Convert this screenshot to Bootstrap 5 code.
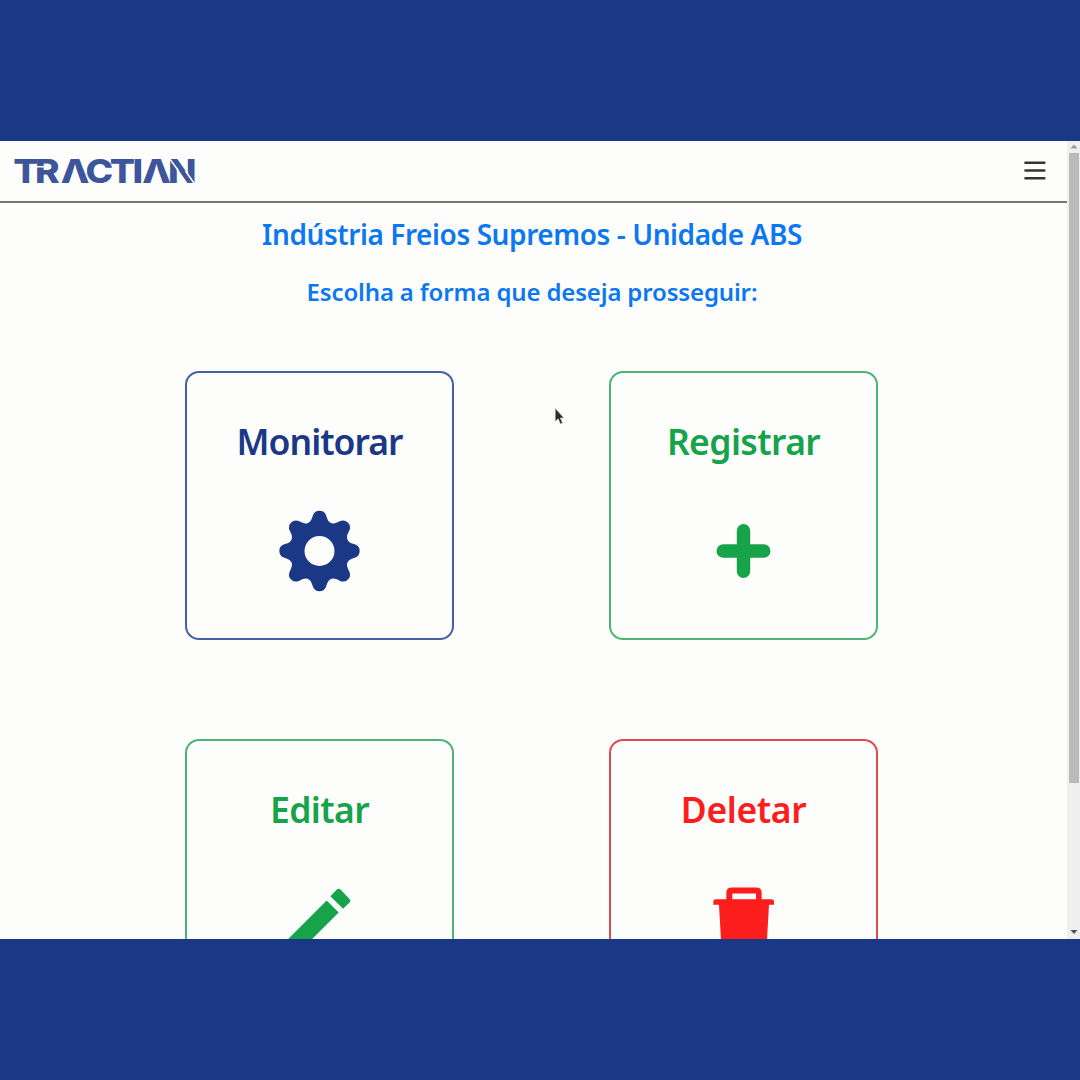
<!DOCTYPE html>
<html lang="pt-BR">
<head>
<meta charset="utf-8">
<meta name="viewport" content="width=device-width, initial-scale=1">
<title>Tractian</title>
<link href="https://cdn.jsdelivr.net/npm/bootstrap@5.3.0/dist/css/bootstrap.min.css" rel="stylesheet">
<style>
  body { background: #1b3887; font-family: "Noto Sans", "Open Sans", sans-serif; height: 1080px; padding: 141px 0; }
  .app-window { height: 798px; background: #fdfdfc; }
  .app-header { height: 62px; border-bottom: 2px solid #777; padding: 0 21px 0 14px; }
  .app-title, .app-subtitle { color: #0b78f2; font-weight: 600; white-space: nowrap; margin: 0; padding-right: 3px; }
  .app-title { font-size: 28px; line-height: 36px; margin-top: 13px; letter-spacing: -.43px; }
  .app-subtitle { font-size: 24px; line-height: 32px; margin-top: 24px; letter-spacing: -.15px; }
  .tiles { column-gap: 155px; row-gap: 99px; margin-top: 63px; padding-right: 4px; }
  .tile { width: 269px; height: 269px; border: 2px solid; border-radius: 14px; flex: none; }
  .tile h2 { font-size: 35.5px; line-height: 44px; margin: 46px 0 40px; font-weight: 600; letter-spacing: -1px; }
  .tile svg { width: 96px; height: 96px; fill: currentColor; margin-right: 1px; }
  .tone-blue { color: #1b3887; border-color: #4561a6; }
  .tone-green { color: #16a34a; border-color: #4cb573; }
  .tone-green h2 { letter-spacing: -.6px; }
  .tone-red { color: #fc1d1d; border-color: #dc4d4d; }
  .tone-red h2 { letter-spacing: -.4px; }
  .scroll-track { width: 13px; background: #efefef; padding: 0 1px 0 2px; }
  .scroll-thumb { height: 630px; width: 10px; background: #bababa; }
  .pointer { left: 554px; top: 266px; }
</style>
</head>
<body>
<div class="app-window d-flex position-relative overflow-hidden">
  <main class="flex-grow-1 overflow-hidden">
    <header class="app-header d-flex align-items-center justify-content-between">
      <svg class="overflow-visible" width="184" height="30" viewBox="0 0 184 30" role="img" aria-label="Tractian">
        <text y="27" transform="scale(1.13 1)" font-family="Inter, sans-serif" font-weight="800" font-size="33" fill="#3c559b" x="-.6 18.7 41.3 63.2 84.8 104.8 113.6 136.2">TRΛCTIΛN</text>
        <path d="M23 10.8h7.5M171.5 15 181 28.5M155.5 2.5 164.5 15" fill="none" stroke="#fdfdfc" stroke-width="1.5"/>
      </svg>
      <svg width="22" height="20" viewBox="0 0 22 20" stroke="#343434" stroke-width="2.4" stroke-linecap="round"><path d="M1.4 1.7h19M1.4 9.5h19M1.4 17.3h19"/></svg>
    </header>
    <h1 class="app-title text-center">Indústria Freios Supremos - Unidade ABS</h1>
    <p class="app-subtitle text-center">Escolha a forma que deseja prosseguir:</p>
    <div class="tiles d-flex flex-wrap justify-content-center">
      <div class="tile tone-blue d-flex flex-column align-items-center">
        <h2>Monitorar</h2>
        <svg viewBox="-48.5 -48 96 96">
          <defs><path id="tooth" d="M0 0-11.6-28C-8.8-29.2-8.2-31-6.7-35.2A7 7 0 0 1 6.7-35.2C8.2-31 8.8-29.2 11.6-28Z"/></defs>
          <circle r="29.5"/>
          <use href="#tooth"/><use href="#tooth" transform="rotate(45)"/><use href="#tooth" transform="rotate(90)"/><use href="#tooth" transform="rotate(135)"/>
          <use href="#tooth" transform="rotate(180)"/><use href="#tooth" transform="rotate(225)"/><use href="#tooth" transform="rotate(270)"/><use href="#tooth" transform="rotate(315)"/>
          <circle r="15" fill="#fdfdfc"/>
        </svg>
      </div>
      <div class="tile tone-green d-flex flex-column align-items-center">
        <h2>Registrar</h2>
        <svg viewBox="-48.5 -48 96 96"><path d="M0-20.3V20.3M-20.3 0H20.3" stroke="currentColor" stroke-width="13.4" stroke-linecap="round"/></svg>
      </div>
      <div class="tile tone-green d-flex flex-column align-items-center">
        <h2>Editar</h2>
        <svg viewBox="273 422.5 288 288"><path d="M440 511 476 547 350 673 305 682 314 637ZM451 498 470 479Q476 473 482 479L508 506Q514 512 508 518L489 536Z"/></svg>
      </div>
      <div class="tile tone-red d-flex flex-column align-items-center">
        <h2>Deletar</h2>
        <svg viewBox="285 422.5 288 288"><path fill-rule="evenodd" d="M379 507V488Q379 472 395 472H469Q485 472 485 488V507H514Q522 507 522 515V524H507L499 665Q498 680 483 680H381Q366 680 365 665L357 524H340V515Q340 507 348 507ZM397 490V507H468V490Z"/></svg>
      </div>
    </div>
  </main>
  <div class="scroll-track d-flex flex-column align-items-center flex-shrink-0">
    <svg width="10" height="12" viewBox="0 0 10 12"><path d="M1.5 7.5h7L5 3.5z" fill="#999"/></svg>
    <div class="scroll-thumb"></div>
    <svg class="mt-auto" width="10" height="14" viewBox="0 0 10 14"><path d="M1.5 5h7L5 9z" fill="#505050"/></svg>
  </div>
  <svg class="pointer position-absolute" width="12" height="20" viewBox="0 0 12 20"><path d="M1.2 1.2V14.5L4.2 11.8 6.3 17 8.6 16 6.4 11H10Z" fill="#2b2b2b" stroke="#d8d8d8" stroke-width=".7"/></svg>
</div>
<script src="https://cdn.jsdelivr.net/npm/bootstrap@5.3.0/dist/js/bootstrap.bundle.min.js"></script>
</body>
</html>
